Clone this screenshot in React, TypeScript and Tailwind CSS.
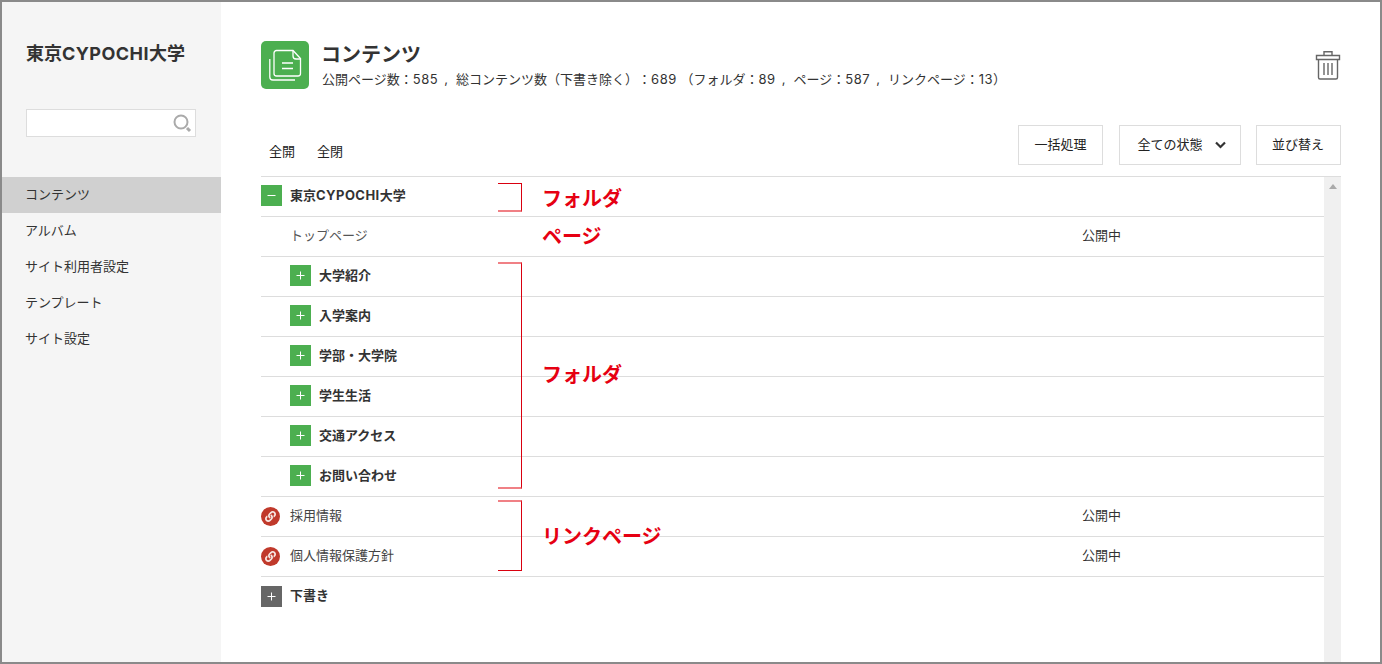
import { FaLink } from "react-icons/fa";

const font = { fontFamily: '"Inter","Noto Sans CJK JP",sans-serif' };

function Box({ minus, gray }: { minus?: boolean; gray?: boolean }) {
  return (
    <span className={`flex h-[21px] w-[21px] shrink-0 items-center justify-center ${gray ? "bg-[#666666]" : "bg-[#4caf50]"}`}>
      <svg width="9" height="9" viewBox="0 0 9 9" className="text-white">
        <path d="M0.5 4.5h8" stroke="currentColor" strokeWidth="1" />
        {!minus && <path d="M4.5 0.5v8" stroke="currentColor" strokeWidth="1" />}
      </svg>
    </span>
  );
}

function LinkBadge() {
  return (
    <span className="mt-[2px] flex h-[19px] w-[19px] shrink-0 items-center justify-center rounded-full bg-[#c0392b]">
      <FaLink size={11} className="text-[#f8e8e4]" />
    </span>
  );
}

function Latin({ children }: { children: string }) {
  return <span className="tracking-[0.45px]">{children}</span>;
}

function Num({ children }: { children: string }) {
  return <span className="tracking-[0.55px]">{children}</span>;
}

function Sep() {
  return <span className="mr-[8px] ml-[6px]">,</span>;
}

function FolderRow({ label }: { label: string }) {
  return (
    <div className="flex h-10 items-center border-b border-[#dddddd] pb-[2px] pl-[29px]">
      <Box />
      <span className="ml-2 text-[13px] font-bold text-[#333333]">{label}</span>
    </div>
  );
}

function LinkRow({ label }: { label: string }) {
  return (
    <div className="flex h-10 items-center border-b border-[#dddddd] pb-[2px]">
      <LinkBadge />
      <span className="ml-[10px] w-[792px] text-[13px] text-[#444444]">{label}</span>
      <span className="text-[13px] text-[#333333]">公開中</span>
    </div>
  );
}

function Bracket({ className }: { className: string }) {
  return <div className={`absolute left-[237px] w-[24px] border-r border-r-[#d9000f] ${className}`} />;
}

function Note({ className, children }: { className: string; children: string }) {
  return <span className={`absolute left-[281px] text-[20px] leading-none font-bold text-[#e60012] ${className}`}>{children}</span>;
}

const btn = "flex h-10 items-center justify-center border border-[#dddddd] text-[13px] text-[#222222]";
const nav = ["アルバム", "サイト利用者設定", "テンプレート", "サイト設定"];

export default function App() {
  return (
    <div className="flex h-[664px] w-[1382px] overflow-hidden border-2 border-[#8a8a8a] bg-white" style={font}>
      <aside className="w-[219px] shrink-0 bg-[#f5f5f5]">
        <h1 className="mt-[38px] ml-[24px] text-[18px] leading-[27px] font-bold text-[#333333]">
          東京<Latin>CYPOCHI</Latin>大学
        </h1>
        <div className="mt-[42px] ml-[24px] flex h-[28px] w-[170px] items-center justify-end border border-[#dddddd] bg-white pr-[3px]">
          <svg width="19" height="19" viewBox="0 0 19 19" fill="none">
            <circle cx="8" cy="8" r="6.500" stroke="#aaaaaa" strokeWidth="2" />
            <path d="M14 14l3 3" stroke="#aaaaaa" strokeWidth="3" />
          </svg>
        </div>
        <nav className="mt-[40px]">
          <div className="flex h-9 items-center bg-[#d0d0d0] pb-[1px] pl-[23px] text-[13px] text-[#333333]">コンテンツ</div>
          {nav.map((n) => (
            <div key={n} className="flex h-9 items-center pb-[1px] pl-[23px] text-[13px] text-[#333333]">{n}</div>
          ))}
        </nav>
      </aside>

      <main className="flex min-w-0 flex-1 flex-col pr-[39px] pl-10">
        <header className="mt-[39px] flex h-12 items-center">
          <span className="flex h-12 w-12 shrink-0 items-center justify-center rounded-[5px] bg-[#4caf50]">
            <svg width="34" height="34" viewBox="0 0 34 34" fill="none" stroke="#ffffff" strokeWidth="1.300">
              <path d="M8.500 2.500H25l7.500 8v15a2.500 2.500 0 0 1-2.500 2.500H8.500A2.500 2.500 0 0 1 6 25.500V5a2.500 2.500 0 0 1 2.500-2.500z" />
              <path d="M25 2.500V8a3 3 0 0 0 3 3h4.500" />
              <path d="M14 15h11M14 20.500h11" />
              <path d="M1.800 11v18a3 3 0 0 0 3 3H27" />
            </svg>
          </span>
          <div className="ml-[13px] flex-1 pt-[2px]">
            <h2 className="-ml-px text-[20px] leading-[26px] font-bold text-[#333333]">コンテンツ</h2>
            <p className="text-[13px] leading-[22px] text-[#333333] [text-spacing-trim:space-all]">
              公開ページ数：<Num>585</Num><Sep />総コンテンツ数（下書き除く）：<Num>689</Num> （フォルダ：<Num>89</Num><Sep />ページ：<Num>587</Num><Sep />リンクページ：<Num>13</Num>）
            </p>
          </div>
          <svg width="26" height="32" viewBox="0 0 26 32" fill="none" stroke="#666666" strokeWidth="1.400">
            <path d="M1.500 6.500h23v4h-23z" />
            <path d="M9 6.500V2.700h8v3.800" />
            <path d="M3.500 10.500v18a1.500 1.500 0 0 0 1.500 1.500h16a1.500 1.500 0 0 0 1.500-1.500v-18" />
            <path d="M9 14v12M13 14v12M17 14v12" />
          </svg>
        </header>

        <div className="mt-9 flex h-10 items-start">
          <div className="flex h-10 items-center gap-[22px] pt-[14px] pl-2 text-[13px] text-[#222222]">
            <span>全開</span>
            <span>全閉</span>
          </div>
          <div className="ml-auto flex">
            <div className={`${btn} w-[85px]`}>一括処理</div>
            <div className={`${btn} ml-4 w-[122px] pl-[3px]`}>
              <span>全ての状態</span>
              <svg width="11" height="8" viewBox="0 0 11 8" fill="none" className="ml-[12px]">
                <path d="M1 1.500l4.500 4.500 4.500-4.500" stroke="#333333" strokeWidth="2.200" />
              </svg>
            </div>
            <div className={`${btn} ml-[15px] w-[85px] pr-[1px]`}>並び替え</div>
          </div>
        </div>

        <div className="relative mt-[11px] flex flex-1 border-t border-[#dddddd]">
          <div className="min-w-0 flex-1">
            <div className="flex h-10 items-center border-b border-[#dddddd] pb-[2px]">
              <Box minus />
              <span className="ml-2 text-[13px] font-bold text-[#333333]">
                東京<Latin>CYPOCHI</Latin>大学
              </span>
            </div>
            <div className="flex h-10 items-center border-b border-[#dddddd] pb-[2px] pl-[29px]">
              <span className="w-[792px] text-[13px] text-[#555555]">トップページ</span>
              <span className="text-[13px] text-[#333333]">公開中</span>
            </div>
            <FolderRow label="大学紹介" />
            <FolderRow label="入学案内" />
            <FolderRow label="学部・大学院" />
            <FolderRow label="学生生活" />
            <FolderRow label="交通アクセス" />
            <FolderRow label="お問い合わせ" />
            <LinkRow label="採用情報" />
            <LinkRow label="個人情報保護方針" />
            <div className="flex h-10 items-center pb-[2px]">
              <Box gray />
              <span className="ml-2 text-[13px] font-bold text-[#333333]">下書き</span>
            </div>
          </div>
          <div className="w-[17px] shrink-0 bg-[#f0f0f0] pt-[7px]">
            <div className="mx-auto h-0 w-0 border-x-[4px] border-b-[5px] border-x-transparent border-b-[#aaaaaa]" />
          </div>

          <Bracket className="top-[6px] h-[29px] border-t border-b-2 border-t-[#d9000f] border-b-[#f08085]" />
          <Bracket className="top-[85px] h-[227px] border-t-2 border-b-2 border-t-[#f08085] border-b-[#f08085]" />
          <Bracket className="top-[323px] h-[71px] border-t-2 border-b border-t-[#f08085] border-b-[#d9000f]" />
          <Note className="top-[12px]">フォルダ</Note>
          <Note className="top-[50px]">ページ</Note>
          <Note className="top-[188px]">フォルダ</Note>
          <Note className="top-[350px]">リンクページ</Note>
        </div>
      </main>
    </div>
  );
}
